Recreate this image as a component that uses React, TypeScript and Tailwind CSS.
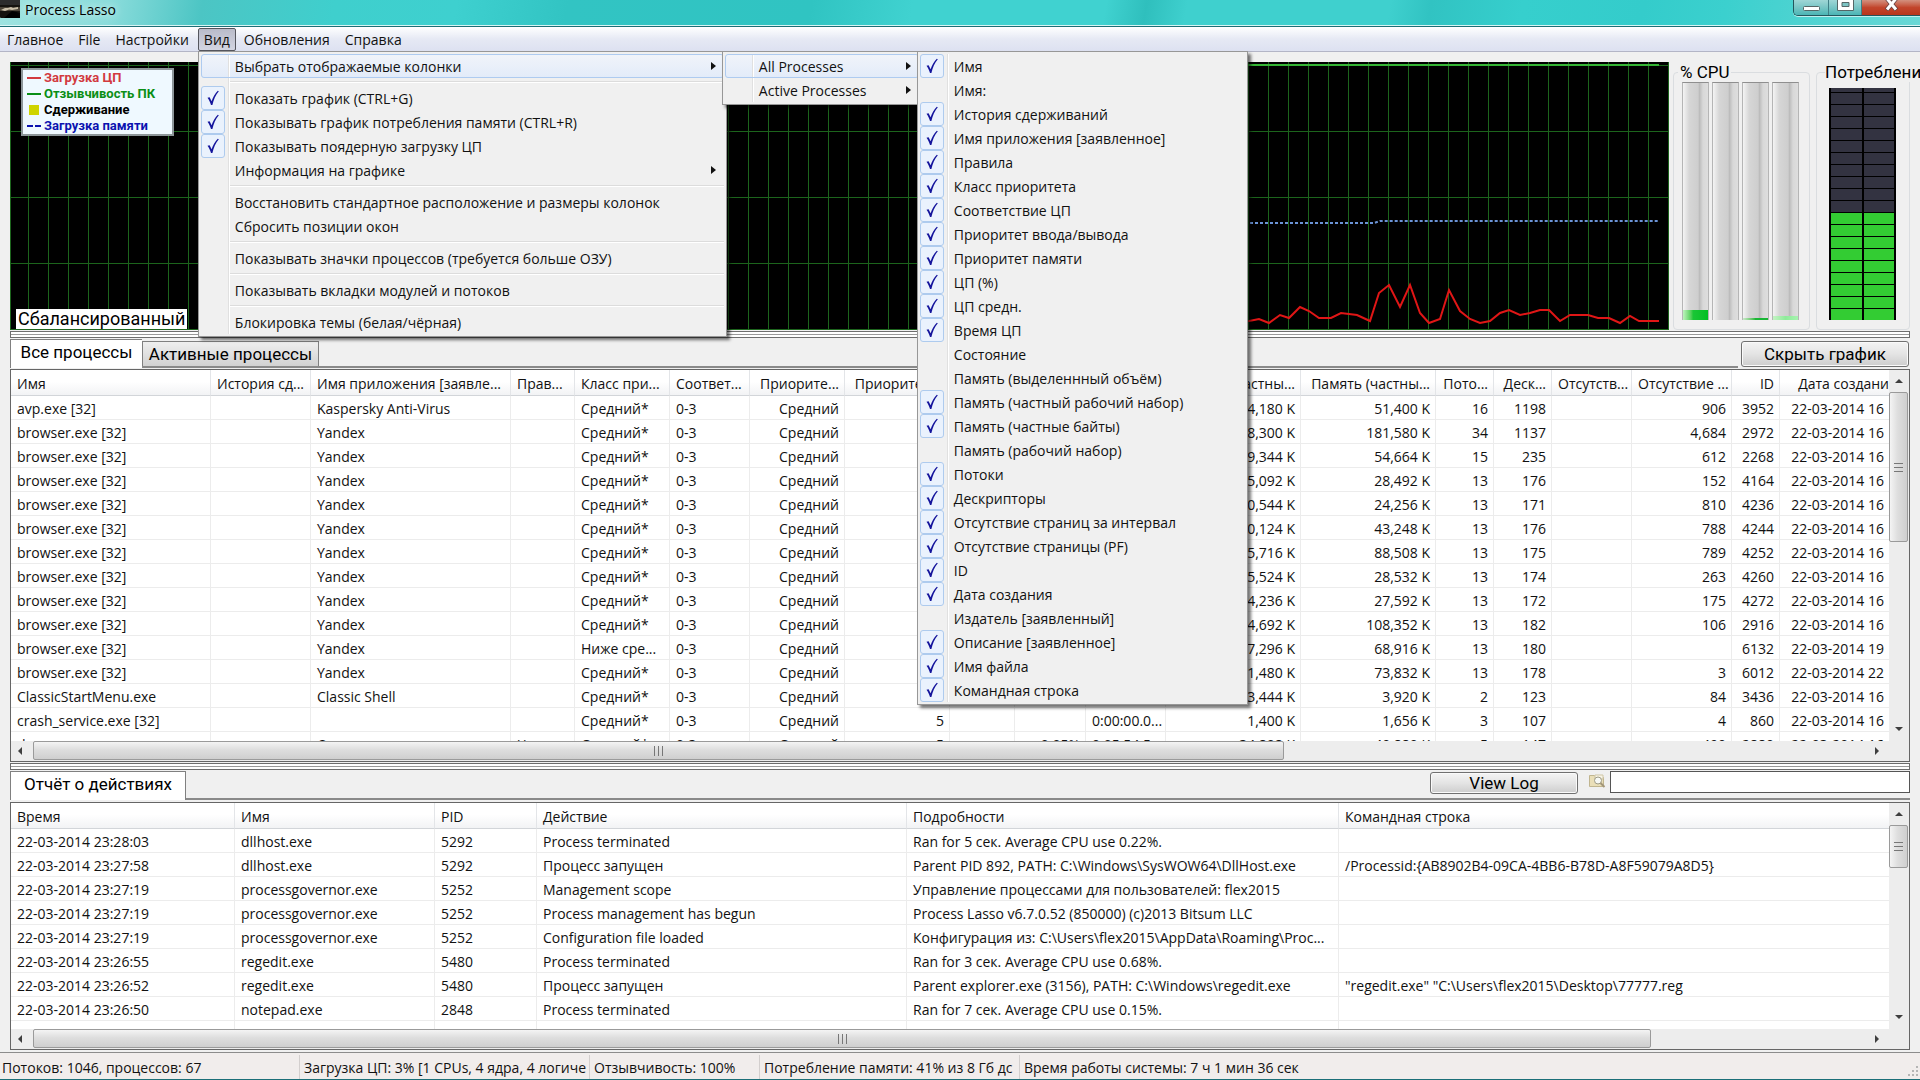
import type { ReactNode } from "react";

type MenuEntry = { label: string; checked?: boolean; hot?: boolean; submenu?: boolean; children?: ReactNode } | null;

const columnEntries: [string, boolean][] = [
  ["Имя", true],
  ["Имя:", false],
  ["История сдерживаний", true],
  ["Имя приложения [заявленное]", true],
  ["Правила", true],
  ["Класс приоритета", true],
  ["Соответствие ЦП", true],
  ["Приоритет ввода/вывода", true],
  ["Приоритет памяти", true],
  ["ЦП (%)", true],
  ["ЦП средн.", true],
  ["Время ЦП", true],
  ["Состояние", false],
  ["Память (выделеннный объём)", false],
  ["Память (частный рабочий набор)", true],
  ["Память (частные байты)", true],
  ["Память (рабочий набор)", false],
  ["Потоки", true],
  ["Дескрипторы", true],
  ["Отсутствие страниц за интервал", true],
  ["Отсутствие страницы (PF)", true],
  ["ID", true],
  ["Дата создания", true],
  ["Издатель [заявленный]", false],
  ["Описание [заявленное]", true],
  ["Имя файла", true],
  ["Командная строка", true],
];

function Tick() {
  return (
    <span className="flex h-6 w-6 shrink-0 items-center justify-center rounded-[3px] border border-[#aecbee] bg-[#eaf2fd]">
      <svg width="22" height="22" viewBox="0 0 22 22" fill="#14149c">
        <path d="M5.500 10.800 7.600 10.200 9.600 14.200C11 10 13 6.600 15.800 3.800L16.800 4.200C13.600 8.200 11.600 12.600 10.400 18H9C8 15 7 12.800 5.500 10.800Z" />
      </svg>
    </span>
  );
}

function Menu({ entries, className, label }: { entries: MenuEntry[]; className: string; label: string }) {
  return (
    <ul
      role="menu"
      aria-label={label}
      className={`absolute z-10 border border-[#979797] bg-[#f0f0f0] p-0.5 shadow-[3px_3px_3px_rgba(0,0,0,0.55)] ${className}`}
    >
      {entries.map((e, i) =>
        e === null ? (
          <li key={i} role="separator" className="flex h-2">
            <span className="w-7 shrink-0 border-r border-[#e0e0e0]" />
            <span className="flex flex-1 items-center border-l border-white">
              <span className="h-0.5 w-full border-t border-b border-t-[#dcdcdc] border-b-white" />
            </span>
          </li>
        ) : (
          <li key={i} role="none" className="relative">
            <button
              type="button"
              role={e.checked === undefined ? "menuitem" : "menuitemcheckbox"}
              aria-checked={e.checked}
              className={`flex h-6 w-full items-center text-left ${
                e.hot ? "rounded-[3px] bg-linear-to-b from-[#f1f4fa] to-[#e2ebf9] outline -outline-offset-1 outline-[#aecbf0]" : ""
              }`}
            >
              <span className="flex h-6 w-7 shrink-0 border-r border-[#e0e0e0]">{e.checked && <Tick />}</span>
              <span className="flex h-6 flex-1 items-center border-l border-white pt-0.5 pl-[5px] whitespace-nowrap">{e.label}</span>
              {e.submenu && (
                <svg width="5" height="8" viewBox="0 0 5 8" className="mr-2">
                  <path d="M0 0 5 4 0 8Z" fill="#111" />
                </svg>
              )}
            </button>
            {e.children}
          </li>
        ),
      )}
    </ul>
  );
}

function ViewMenu() {
  const columns = (
    <Menu
      label="All Processes"
      className="-top-[3px] left-full -ml-0.5 w-[331px]"
      entries={columnEntries.map(([label, checked]) => ({ label, checked }))}
    />
  );
  const lists = (
    <Menu
      label="Выбрать отображаемые колонки"
      className="-top-[3px] left-full -ml-0.5 w-[200px]"
      entries={[
        { label: "All Processes", submenu: true, hot: true, children: columns },
        { label: "Active Processes", submenu: true },
      ]}
    />
  );
  return (
    <Menu
      label="Вид"
      className="top-full left-0 w-[529px]"
      entries={[
        { label: "Выбрать отображаемые колонки", submenu: true, hot: true, children: lists },
        null,
        { label: "Показать график (CTRL+G)", checked: true },
        { label: "Показывать график потребления памяти (CTRL+R)", checked: true },
        { label: "Показывать поядерную загрузку ЦП", checked: true },
        { label: "Информация на графике", submenu: true },
        null,
        { label: "Восстановить стандартное расположение и размеры колонок" },
        { label: "Сбросить позиции окон" },
        null,
        { label: "Показывать значки процессов (требуется больше ОЗУ)" },
        null,
        { label: "Показывать вкладки модулей и потоков" },
        null,
        { label: "Блокировка темы (белая/чёрная)" },
      ]}
    />
  );
}

function TitleBar() {
  return (
    <header className="flex h-[27px] items-start border-b border-[#1d6f77] bg-[linear-gradient(100deg,#9fe3e0_0px,#8adcdb_110px,#4cc5c4_200px,#3fcfcd_330px,#3ed0cf_450px,#32c4c3_560px,#30c4c2_800px,#40d2d0_900px,#40d2d0_1090px,#2fbfbd_1130px,#3fd0ce_1170px,#3fd0ce_1370px,#31c3c2_1410px,#36cfcd_1500px,#34cccb_1620px,#3bd0ce_1700px,#6ad8d6_1900px)] shadow-[inset_0_-1px_0_#d8f5f4]">
      <svg width="20" height="18" viewBox="0 0 20 18" className="shrink-0">
        <rect width="20" height="18" rx="1" fill="#15130f" />
        <path d="M0 7h20v4H0z" fill="#4b4438" />
        <path d="M1 10 5 8h3l3-1 2 1 5-1v2l-6 1-3-.6L5 11z" fill="#c9bfa8" />
        <path d="M0 0h20v5H0z" fill="#2c2c2c" />
        <path d="M4 18 12 11l8 2v5z" fill="#000" />
      </svg>
      <h1 className="ml-[5px] h-5 text-black [text-shadow:0_0_8px_#fff]">Process Lasso</h1>
      <div className="ml-auto flex h-4 overflow-hidden rounded-bl-[5px] border-b border-l border-[#24565d] shadow-[0_1px_0_#bff0ee]">
        <button type="button" aria-label="Свернуть" className="flex w-[35px] items-end justify-center border-r border-[#3f7f86] bg-linear-to-b from-[#9fd6d6] to-[#49b5b5] pb-1">
          <svg width="17" height="5" viewBox="0 0 17 5"><rect x=".5" y=".5" width="16" height="4" rx="1" fill="#fff" stroke="#566" /></svg>
        </button>
        <button type="button" aria-label="Развернуть" className="flex w-[33px] items-end justify-center border-r border-[#3f7f86] bg-linear-to-b from-[#9fd6d6] to-[#49b5b5] pb-1">
          <svg width="17" height="11" viewBox="0 0 17 11"><path d="M.5-1v11.500h16V-1z" fill="#fff" stroke="#566" /><path d="M5 2.500h7v4H5z" fill="#7cc4c4" stroke="#566" /></svg>
        </button>
        <button type="button" aria-label="Закрыть" className="flex w-[58px] items-end justify-center bg-linear-to-b from-[#d2907f] via-[#c2452c] to-[#b8351c] pb-1">
          <svg width="15" height="12" viewBox="0 0 15 12"><path d="M2.500-1 12.500 11M12.500-1 2.500 11" stroke="#644" strokeWidth="4.500" /><path d="M2.500-1 12 10.500M12.500-1 3 10.500" stroke="#fff" strokeWidth="3" /></svg>
        </button>
      </div>
    </header>
  );
}

function MenuBar() {
  const item = "h-[23px] px-[7px]";
  return (
    <nav className="flex h-[25px] gap-px border-b border-[#b3b5c6] bg-linear-to-b from-white via-[#e6e9f4] to-[#dde1f1] pt-px">
      <button type="button" className={item}>Главное</button>
      <button type="button" className={item}>File</button>
      <button type="button" className={item}>Настройки</button>
      <div className="relative ml-px">
        <button type="button" aria-haspopup="menu" aria-expanded="true" className="h-[23px] w-[38px] rounded-[2px] border border-[#55565e] bg-linear-to-b from-[#b9bbc9] to-[#d3d5e2]">
          Вид
        </button>
        <ViewMenu />
      </div>
      <button type="button" className={item}>Обновления</button>
      <button type="button" className={item}>Справка</button>
    </nav>
  );
}

const cpuLine =
  "1200,322 1249,321 1259,319 1269,323 1280,315 1289,318 1300,307 1309,311 1319,318 1331,318 1341,313 1357,315 1370,321 1379,293 1389,285 1400,307 1410,285 1420,313 1429,323 1440,319 1449,290 1460,311 1470,319 1480,323 1490,321 1500,313 1509,310 1520,315 1530,313 1540,310 1549,310 1560,321 1570,315 1588,315 1598,318 1609,318 1620,323 1630,316 1639,321 1659,321";

function Chart() {
  return (
    <section aria-label="График" className="relative min-w-0 flex-1 bg-black">
      <svg className="absolute inset-0 h-full w-full" viewBox="10 62 1659 268" preserveAspectRatio="xMaxYMid slice">
        <g stroke="#1c641c" shapeRendering="crispEdges">
          {Array.from({ length: 82 }, (_, i) => (
            <path key={i} d={`M${28.5 + i * 20} 62V330`} />
          ))}
          {[65, 131, 197, 263].map((y) => (
            <path key={y} d={`M10 ${y + 0.5}H1669`} />
          ))}
          <path d="M10.500 62V329.500H1668.500V62" fill="none" />
        </g>
        <path d="M1200 65H1659" stroke="#34b434" strokeWidth="2" />
        <path d="M1200 223H1374L1380 221H1659" fill="none" stroke="#6b93d6" strokeWidth="2" strokeDasharray="3 2" />
        <polyline points={cpuLine} fill="none" stroke="#e01616" strokeWidth="2" />
      </svg>
      <ul className="absolute top-1.5 left-[11px] w-[153px] border-2 border-[#8d9699] bg-[#eff9ff] pl-1 font-[Roboto] text-[13px] leading-4 font-bold">
        <li className="flex items-center gap-[3px] text-[#d23a3f]"><span className="h-0.5 w-[14px] bg-[#d23a3f]" />Загрузка ЦП</li>
        <li className="flex items-center gap-[3px] text-[#0a8f16]"><span className="h-0.5 w-[14px] bg-[#0a8f16]" />Отзывчивость ПК</li>
        <li className="flex items-center gap-[3px] text-black"><span className="flex w-[14px] justify-center"><span className="h-2.5 w-2.5 bg-[#cfd400]" /></span>Сдерживание</li>
        <li className="flex items-center gap-[3px] text-[#0b12b0]"><span className="flex w-[14px] justify-between"><span className="h-0.5 w-[6px] bg-[#0b12b0]" /><span className="h-0.5 w-[6px] bg-[#0b12b0]" /></span>Загрузка памяти</li>
      </ul>
      <p className="absolute bottom-px left-1.5 bg-white px-0.5 font-[Roboto] text-[18px] leading-5 text-black">Сбалансированный</p>
    </section>
  );
}

function CpuBar({ children }: { children?: ReactNode }) {
  return (
    <div className="flex h-[238px] w-[27px] flex-col justify-end border-t border-r border-l border-[#8f8f8f] border-r-[#b5b5b5] border-l-[#b5b5b5] bg-[linear-gradient(to_right,#f4f4f4,#d6d6d6_25%,#cecece_60%,#bcbcbc_66%,#d8d8d8_80%,#dedede)]">
      {children}
    </div>
  );
}

function Meters() {
  return (
    <>
      <fieldset className="ml-1 w-[137px] shrink-0 rounded-[4px] border border-[#dadde0] pl-2">
        <legend className="-ml-1 px-0.5 font-[Roboto] text-[17px] leading-5 text-black">% CPU</legend>
        <div className="flex gap-[3px]">
          <CpuBar><span className="h-2.5 bg-linear-to-r from-[#bdf3bd] via-[#19c636] via-40% to-[#00bf22]" /></CpuBar>
          <CpuBar />
          <CpuBar><span className="h-0.5 bg-linear-to-r from-[#c9e9c9] via-[#19b636] via-50% to-[#19b636]" /></CpuBar>
          <CpuBar><span className="h-1 bg-linear-to-r from-[#c3f3c3] via-[#8eeb9a] to-[#a7f3af]" /></CpuBar>
        </div>
      </fieldset>
      <fieldset className="ml-1.5 w-[94px] min-w-0 shrink-0 rounded-[4px] border border-[#dadde0] pl-3">
        <legend className="-ml-1 pr-0.5 font-[Roboto] text-[17px] leading-5 whitespace-nowrap text-black">Потребление</legend>
        <div className="mt-1.5 flex h-[232px] w-[67px] flex-col bg-black px-0.5">
          <div className="grid h-1 grid-cols-2 gap-0.5"><span className="bg-[#333341]" /><span className="bg-[#333341]" /></div>
          {Array.from({ length: 19 }, (_, i) => (
            <div key={i} className="grid h-3 grid-cols-2 gap-0.5 pt-px">
              <span className={i < 10 ? "bg-[#333341]" : "bg-[#33cc33]"} />
              <span className={i < 10 ? "bg-[#333341]" : "bg-[#33cc33]"} />
            </div>
          ))}
        </div>
      </fieldset>
    </>
  );
}

function Splitter() {
  return (
    <div className="my-px flex h-[7px] items-center border border-[#6d6d6d] bg-white">
      <span className="h-px w-full bg-[#9a9a9a]" />
    </div>
  );
}

function Arrow({ d }: { d: string }) {
  return (
    <svg width="10" height="10" viewBox="0 0 10 10">
      <path d={d} fill="#3f3f3f" />
    </svg>
  );
}

function HScroll({ thumb }: { thumb: string }) {
  return (
    <div className="flex h-5 items-start bg-[#ededed] pr-[27px]">
      <button type="button" aria-label="Прокрутить влево" className="flex h-[19px] w-[22px] items-center justify-center pr-1"><Arrow d="M7 1 3 5 7 9Z" /></button>
      <div className="h-[19px] flex-1">
        <div className={`flex h-full items-center justify-center gap-[3px] rounded-[2px] border border-[#9a9a9a] bg-linear-to-b from-[#f4f4f4] via-[#dedede] via-45% to-[#cfcfcf] ${thumb}`}>
          <span className="h-2.5 w-px bg-[#777]" /><span className="h-2.5 w-px bg-[#777]" /><span className="h-2.5 w-px bg-[#777]" />
        </div>
      </div>
      <button type="button" aria-label="Прокрутить вправо" className="flex h-[19px] items-center"><Arrow d="M3 1 7 5 3 9Z" /></button>
    </div>
  );
}

function VScroll({ thumb }: { thumb: string }) {
  return (
    <div className="flex w-5 shrink-0 flex-col items-center bg-[#ededed] pr-px pb-[7px]">
      <button type="button" aria-label="Прокрутить вверх" className="flex h-[22px] items-center"><Arrow d="M1 7 5 3 9 7Z" /></button>
      <div className="w-full flex-1">
        <div className={`flex flex-col items-center justify-center gap-[3px] rounded-[2px] border border-[#9a9a9a] bg-linear-to-r from-[#f4f4f4] via-[#dedede] via-45% to-[#cfcfcf] ${thumb}`}>
          <span className="h-px w-[9px] bg-[#777]" /><span className="h-px w-[9px] bg-[#777]" /><span className="h-px w-[9px] bg-[#777]" />
        </div>
      </div>
      <button type="button" aria-label="Прокрутить вниз"><Arrow d="M1 3 5 7 9 3Z" /></button>
    </div>
  );
}

type Column = { w?: number; title: string; right?: boolean };

function Grid({ label, columns, rows, height }: { label: string; columns: Column[]; rows: string[][]; height: string }) {
  return (
    <div className={`min-w-0 flex-1 overflow-hidden bg-white ${height}`}>
      <table aria-label={label} className="w-full table-fixed border-separate border-spacing-0">
        <colgroup>
          {columns.map((c, i) => (
            <col key={i} style={{ width: c.w }} />
          ))}
        </colgroup>
        <thead>
          <tr className="h-[26px] bg-linear-to-b from-white from-45% to-[#f1f2f4]">
            {columns.map((c, i) => (
              <th key={i} scope="col" className={`h-[26px] overflow-hidden border-r border-b border-r-[#e3e5e8] border-b-[#d2d5d9] pt-0.5 pr-[5px] pl-1.5 font-normal whitespace-nowrap last:border-r-0 last:pr-0 ${c.right ? "text-right" : "text-left"}`}>
                {c.title}
              </th>
            ))}
          </tr>
        </thead>
        <tbody>
          {rows.map((r, i) => (
            <tr key={i}>
              {columns.map((c, j) => (
                <td key={j} className={`h-6 overflow-hidden border-r border-b border-[#ececec] pt-0.5 pr-[5px] pl-1.5 leading-5 whitespace-nowrap last:border-r-0 ${c.right ? "text-right" : "text-left"}`}>
                  {r[j]}
                </td>
              ))}
            </tr>
          ))}
        </tbody>
      </table>
    </div>
  );
}

const processColumns: Column[] = [
  { w: 200, title: "Имя" },
  { w: 100, title: "История сд..." },
  { w: 200, title: "Имя приложения [заявле..." },
  { w: 64, title: "Прав..." },
  { w: 95, title: "Класс при..." },
  { w: 80, title: "Соответ..." },
  { w: 95, title: "Приорите...", right: true },
  { w: 105, title: "Приоритет ...", right: true },
  { w: 65, title: "ЦП (...", right: true },
  { w: 71, title: "ЦП ср...", right: true },
  { w: 80, title: "Время ЦП", right: true },
  { w: 135, title: "Память (частны...", right: true },
  { w: 135, title: "Память (частны...", right: true },
  { w: 58, title: "Пото...", right: true },
  { w: 58, title: "Деск...", right: true },
  { w: 80, title: "Отсутств...", right: true },
  { w: 100, title: "Отсутствие ...", right: true },
  { w: 48, title: "ID", right: true },
  { title: "Дата создани", right: true },
];

function proc(name: string, app: string, ws: string, pb: string, th: string, h: string, pf: string, id: string, hour = "16", cls = "Средний*", rule = "", avg = "", time = "0:00:00.0..."): string[] {
  return [name, "", app, rule, cls, "0-3", "Средний", "5", "", avg, time, `${ws} K`, `${pb} K`, th, h, "", pf, id, `22-03-2014 ${hour}`];
}

const B = "browser.exe [32]";
const Y = "Yandex";
const processes = [
  proc("avp.exe [32]", "Kaspersky Anti-Virus", "34,180", "51,400", "16", "1198", "906", "3952"),
  proc(B, Y, "158,300", "181,580", "34", "1137", "4,684", "2972"),
  proc(B, Y, "39,344", "54,664", "15", "235", "612", "2268"),
  proc(B, Y, "15,092", "28,492", "13", "176", "152", "4164"),
  proc(B, Y, "10,544", "24,256", "13", "171", "810", "4236"),
  proc(B, Y, "30,124", "43,248", "13", "176", "788", "4244"),
  proc(B, Y, "75,716", "88,508", "13", "175", "789", "4252"),
  proc(B, Y, "15,524", "28,532", "13", "174", "263", "4260"),
  proc(B, Y, "14,236", "27,592", "13", "172", "175", "4272"),
  proc(B, Y, "94,692", "108,352", "13", "182", "106", "2916"),
  proc(B, Y, "57,296", "68,916", "13", "180", "", "6132", "19", "Ниже сре..."),
  proc(B, Y, "61,480", "73,832", "13", "178", "3", "6012", "22"),
  proc("ClassicStartMenu.exe", "Classic Shell", "3,444", "3,920", "2", "123", "84", "3436"),
  proc("crash_service.exe [32]", "", "1,400", "1,656", "3", "107", "4", "860"),
  proc("dwm.exe", "Операционная систем...", "34,808", "40,880", "5", "147", "490", "2880", "16", "Средний*", "Ч...", "0.05%", "0:05:54.5..."),
];

const logColumns: Column[] = [
  { w: 224, title: "Время" },
  { w: 200, title: "Имя" },
  { w: 102, title: "PID" },
  { w: 370, title: "Действие" },
  { w: 432, title: "Подробности" },
  { title: "Командная строка" },
];

const log = [
  ["22-03-2014 23:28:03", "dllhost.exe", "5292", "Process terminated", "Ran for 5 сек. Average CPU use 0.22%.", ""],
  ["22-03-2014 23:27:58", "dllhost.exe", "5292", "Процесс запущен", "Parent PID 892, PATH: C:\\Windows\\SysWOW64\\DllHost.exe", "/Processid:{AB8902B4-09CA-4BB6-B78D-A8F59079A8D5}"],
  ["22-03-2014 23:27:19", "processgovernor.exe", "5252", "Management scope", "Управление процессами для пользователей: flex2015", ""],
  ["22-03-2014 23:27:19", "processgovernor.exe", "5252", "Process management has begun", "Process Lasso v6.7.0.52 (850000) (c)2013 Bitsum LLC", ""],
  ["22-03-2014 23:27:19", "processgovernor.exe", "5252", "Configuration file loaded", "Конфигурация из: C:\\Users\\flex2015\\AppData\\Roaming\\Proc...", ""],
  ["22-03-2014 23:26:55", "regedit.exe", "5480", "Process terminated", "Ran for 3 сек. Average CPU use 0.68%.", ""],
  ["22-03-2014 23:26:52", "regedit.exe", "5480", "Процесс запущен", "Parent explorer.exe (3156), PATH: C:\\Windows\\regedit.exe", "\"regedit.exe\" \"C:\\Users\\flex2015\\Desktop\\77777.reg"],
  ["22-03-2014 23:26:50", "notepad.exe", "2848", "Process terminated", "Ran for 7 сек. Average CPU use 0.15%.", ""],
  ["", "", "", "", "", ""],
];

const tabText = "font-[Roboto] text-[17px] text-black whitespace-nowrap";
const pushButton = "rounded-[3px] border border-[#707070] bg-linear-to-b from-[#f4f4f4] via-[#e4e4e4] via-50% to-[#cdcdcd] shadow-[inset_0_0_0_1px_#fafafa]";

function StatusBar() {
  const cell = "overflow-hidden border-r border-[#d3cfce] whitespace-nowrap";
  return (
    <footer className="mt-0.5 flex h-[28px] items-stretch border-t border-b border-t-[#8c8c8c] border-b-[#1c6f78] bg-[#f1edec] pt-0.5 leading-[25px]">
      <span className={`${cell} w-[300px] pl-0.5`}>Потоков: 1046, процессов: 67</span>
      <span className={`${cell} w-[290px] pl-1`}>Загрузка ЦП: 3% [1 CPUs, 4 ядра, 4 логиче</span>
      <span className={`${cell} w-[170px] pl-1`}>Отзывчивость: 100%</span>
      <span className={`${cell} w-[260px] pl-1`}>Потребление памяти: 41% из 8 Гб дс</span>
      <span className="flex-1 pl-1 whitespace-nowrap">Время работы системы: 7 ч 1 мин 36 сек</span>
      <svg width="14" height="14" viewBox="0 0 14 14" className="self-end" fill="#b5b5b5">
        <path d="M10 1h2v2h-2zM10 5h2v2h-2zM6 5h2v2H6zM10 9h2v2h-2zM6 9h2v2H6zM2 9h2v2H2z" />
      </svg>
    </footer>
  );
}

export default function App() {
  return (
    <div className="flex min-h-screen flex-col overflow-hidden bg-[#f0f0f0] font-['Open_Sans','Noto_Sans',sans-serif] text-[14px] leading-5 text-[#111]">
      <TitleBar />
      <MenuBar />
      <main className="flex flex-1 flex-col px-2.5 pt-2.5">
        <div className="flex h-[268px]">
          <Chart />
          <Meters />
        </div>
        <Splitter />
        <div className="flex h-[29px]">
          <div role="tablist" className="flex flex-1">
            <button type="button" role="tab" aria-selected="true" className={`${tabText} w-[132px] border-t border-l border-[#808080] bg-white pb-1`}>Все процессы</button>
            <div className="flex flex-1 border-b-2 border-[#8a8a8a] pt-0.5">
              <button type="button" role="tab" aria-selected="false" className={`${tabText} w-[177px] border border-b-0 border-[#808080] bg-linear-to-b from-[#efefef] to-[#d2d2d2]`}>Активные процессы</button>
            </div>
          </div>
          <button type="button" className={`${tabText} ${pushButton} mt-0.5 mr-px ml-[3px] h-[26px] w-[168px]`}>Скрыть график</button>
        </div>
        <section className="mt-px border border-[#666]">
          <div className="flex h-[371px]">
            <Grid label="Все процессы" columns={processColumns} rows={processes} height="h-[371px]" />
            <VScroll thumb="h-[150px]" />
          </div>
          <HScroll thumb="w-[68%]" />
        </section>
        <Splitter />
        <div className="flex h-[29px]">
          <button type="button" role="tab" aria-selected="true" className={`${tabText} w-[176px] border-t border-r border-l border-[#808080] bg-white pb-1`}>Отчёт о действиях</button>
          <div className="flex flex-1 items-start justify-end border-b-2 border-[#8a8a8a]">
            <button type="button" className={`${tabText} ${pushButton} mt-px h-[22px] w-[148px] leading-5`}>View Log</button>
            <svg width="17" height="15" viewBox="0 0 17 15" className="mt-0.5 mr-1 ml-[11px]">
              <path d="M.5 2.500h5l1.500 2h7.500v9H.5z" fill="#eadfb8" stroke="#c0b58f" />
              <path d="M6 2h8v4H6z" fill="#f8f4e6" stroke="#cfc6a6" />
              <circle cx="9" cy="7.500" r="3.500" fill="#f7f9f6" stroke="#9d9a86" />
              <path d="M11.500 10 15.500 14" stroke="#a3977a" strokeWidth="2" />
            </svg>
            <input aria-label="Поиск" className="h-[22px] w-[300px] border border-[#555] bg-white px-1 outline-none" />
          </div>
        </div>
        <section className="mt-0.5 border border-[#666]">
          <div className="flex h-[226px]">
            <Grid label="Отчёт о действиях" columns={logColumns} rows={log} height="h-[226px]" />
            <VScroll thumb="h-[43px]" />
          </div>
          <HScroll thumb="w-[88%]" />
        </section>
      </main>
      <StatusBar />
    </div>
  );
}
